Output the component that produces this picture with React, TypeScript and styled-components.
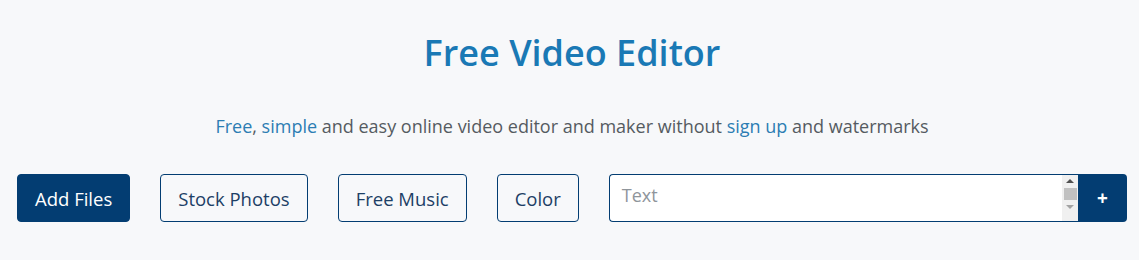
import styled, { createGlobalStyle } from "styled-components";

const GlobalStyle = createGlobalStyle`
	html, body {
		margin: 0;
		padding: 0;
		background-color: #f7f8fa;
		font-family: "Open Sans", "Noto Sans", sans-serif;
	}
`;

const StyledPage = styled.main`
	height: 260px;
	padding: 0 12px 0 17px;
	box-sizing: border-box;
	display: flex;
	flex-direction: column;
	align-items: center;
	h1 {
		margin: 28px 0 0;
		font-size: 36px;
		font-weight: 600;
		line-height: 50px;
		color: #1a79b5;
	}
	p {
		margin: 35px 0 0;
		font-size: 18px;
		line-height: 26px;
		color: #555b61;
		a {
			color: #2c7db3;
			text-decoration: none;
		}
	}
`;

const StyledToolbar = styled.div`
	align-self: stretch;
	margin-top: 35px;
	display: flex;
	align-items: center;
	gap: 30px;
`;

const StyledButton = styled.button<{ $primary?: boolean }>`
	height: 48px;
	padding: 0 17px;
	border-radius: 4px;
	border: 1px solid #033d72;
	background-color: ${(p) => (p.$primary ? "#033d72" : "transparent")};
	color: ${(p) => (p.$primary ? "#ffffff" : "#1d3f66")};
	font-family: inherit;
	font-size: 18.5px;
	cursor: pointer;
`;

const StyledTextGroup = styled.div`
	flex: 1;
	display: flex;
	height: 48px;
	.text-field {
		flex: 1;
		display: flex;
		background-color: #ffffff;
		border: 1px solid #033d72;
		border-right: none;
		border-radius: 4px 0 0 4px;
		overflow: hidden;
		textarea {
			flex: 1;
			border: none;
			outline: none;
			resize: none;
			padding: 7px 12px;
			font-family: inherit;
			font-size: 18px;
			line-height: 26px;
			background: transparent;
			&::placeholder {
				color: #8f959b;
			}
		}
	}
	.add-text {
		width: 49px;
		border: none;
		border-radius: 0 4px 4px 0;
		background-color: #033d72;
		color: #ffffff;
		font-size: 19px;
		font-weight: 700;
		font-family: inherit;
		cursor: pointer;
	}
`;

const StyledScrollbar = styled.div`
	width: 16px;
	background-color: #f0f0f0;
	display: flex;
	flex-direction: column;
	align-items: center;
	.arrow {
		height: 12px;
		width: 0;
		display: flex;
		align-items: center;
		justify-content: center;
	}
	.arrow--up::after {
		content: "";
		border-left: 4px solid transparent;
		border-right: 4px solid transparent;
		border-bottom: 4px solid #505050;
	}
	.arrow--down::after {
		content: "";
		border-left: 4px solid transparent;
		border-right: 4px solid transparent;
		border-top: 4px solid #a3a3a3;
	}
	.thumb {
		width: 13px;
		height: 12px;
		margin: 1px 0;
		background-color: #c1c1c1;
	}
`;

export default function App() {
	return (
		<>
			<GlobalStyle />
			<StyledPage>
				<h1>Free Video Editor</h1>
				<p>
					<a href="#">Free</a>, <a href="#">simple</a> and easy online video editor and
					maker without <a href="#">sign up</a> and watermarks
				</p>
				<StyledToolbar>
					<StyledButton $primary>Add Files</StyledButton>
					<StyledButton>Stock Photos</StyledButton>
					<StyledButton>Free Music</StyledButton>
					<StyledButton>Color</StyledButton>
					<StyledTextGroup>
						<div className="text-field">
							<textarea placeholder="Text" rows={1} />
							<StyledScrollbar>
								<span className="arrow arrow--up" />
								<span className="thumb" />
								<span className="arrow arrow--down" />
							</StyledScrollbar>
						</div>
						<button className="add-text">+</button>
					</StyledTextGroup>
				</StyledToolbar>
			</StyledPage>
		</>
	);
}
